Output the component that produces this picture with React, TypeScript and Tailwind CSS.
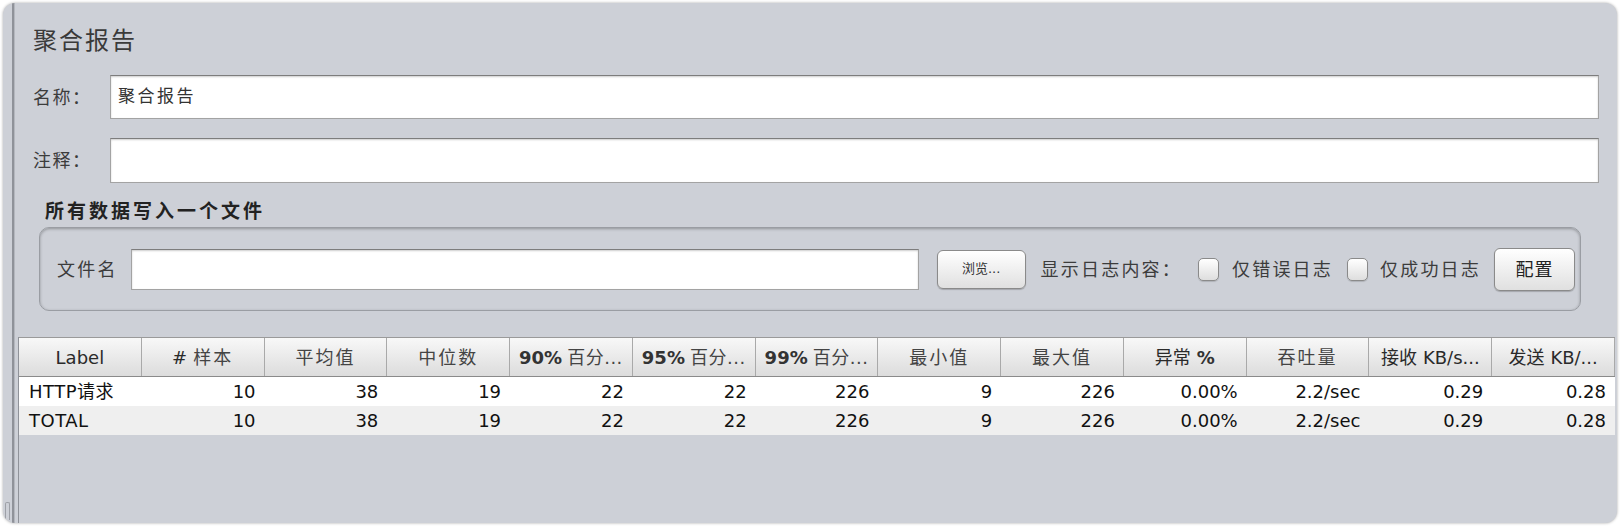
const headers = [
  "Label",
  "#|样本",
  "|平均值",
  "|中位数",
  "90%|百分...",
  "95%|百分...",
  "99%|百分...",
  "|最小值",
  "|最大值",
  "异常|%",
  "|吞吐量",
  "接收|KB/s...",
  "发送|KB/...",
];

const rows = [
  ["HTTP请求", "10", "38", "19", "22", "22", "226", "9", "226", "0.00%", "2.2/sec", "0.29", "0.28"],
  ["TOTAL", "10", "38", "19", "22", "22", "226", "9", "226", "0.00%", "2.2/sec", "0.29", "0.28"],
];

function TextField({ value, className }: { value?: string; className?: string }) {
  return (
    <div
      className={
        "flex items-center bg-white border border-[#a3a3a3] border-t-[#7d7d7d] shadow-[inset_0_1px_2px_rgba(0,0,0,0.2)] pl-[7px] text-[17px] tracking-[2.5px] text-[#333] " +
        (className ?? "")
      }
    >
      {value}
    </div>
  );
}

function Checkbox() {
  return (
    <div className="w-[21px] h-[23px] rounded-[5px] border border-[#8a8a8a] bg-linear-to-b from-white to-[#dedede] shadow-[0_1px_1px_rgba(0,0,0,0.15)]" />
  );
}

function HeaderCell({ text }: { text: string }) {
  const [a, b] = text.includes("|") ? text.split("|") : [text, ""];
  const pct = /\d%/.test(a);
  return (
    <div
      className={
        "flex items-center justify-center border-r border-[#a9a9a9] bg-linear-to-b from-[#f8f8f8] to-[#dcdcdc] text-[18px] text-[#2a2a2a] whitespace-nowrap overflow-hidden " +
        (pct ? "gap-[5px]" : "gap-[6px]")
      }
    >
      {a && <span className={pct ? "font-semibold text-[#333]" : ""}>{a}</span>}
      {b && (
        <span
          className={
            pct
              ? "tracking-[0.5px] text-[#444]"
              : /[\u4e00-\u9fff]/.test(b)
                ? "tracking-[2px] text-[#444]"
                : b === "%"
                  ? "font-semibold text-[#333]"
                  : ""
          }
        >
          {b}
        </span>
      )}
    </div>
  );
}

export default function App() {
  return (
    <div className="w-[1620px] h-[528px] bg-white pt-[3px] px-[3px] pb-[5px] flex font-['DejaVu_Sans','Noto_Sans_CJK_SC',sans-serif]">
      <div className="flex-1 flex rounded-[12px] bg-[#cdd0d7] shadow-[0_0_3px_rgba(0,0,0,0.35)] overflow-hidden">
        {/* left splitter strip */}
        <div className="w-[9px] flex flex-col justify-end items-center pb-[3px]">
          <div className="w-[5px] h-[18px] rounded-t-[2px] border border-b-0 border-[#9da0a7]" />
        </div>
        <div className="w-[3px] bg-[#8f9299] border-r border-[#b4b7be]" />

        <div className="flex-1 flex flex-col">
          <div className="pt-[23px] pl-[18px] h-[53px] text-[24px] leading-[30px] tracking-[2px] text-[#3a3a3a]">
            聚合报告
          </div>

          <div className="mt-[19px] flex items-center pl-[18px] pr-[18px]">
            <div className="w-[77px] text-[18px] tracking-[1.5px] text-[#3c3c3c]">名称：</div>
            <TextField value="聚合报告" className="flex-1 h-[44px]" />
          </div>

          <div className="mt-[19px] flex items-center pl-[18px] pr-[18px]">
            <div className="w-[77px] text-[18px] tracking-[1.5px] text-[#3c3c3c]">注释：</div>
            <TextField className="flex-1 h-[45px]" />
          </div>

          <div className="mt-[16px] pl-[30px] h-[24px] text-[19px] leading-[24px] font-bold tracking-[3px] text-[#222]">
            所有数据写入一个文件
          </div>

          <div className="mt-[4px] ml-[24px] mr-[36px] h-[84px] rounded-[10px] border border-[#9a9da3] shadow-[inset_0_1px_3px_rgba(0,0,0,0.3)] flex items-center pl-[17px] text-[18px] tracking-[2.2px] text-[#3c3c3c]">
            <span>文件名</span>
            <TextField className="ml-[13px] w-[788px] h-[41px]" />
            <button className="ml-[18px] w-[89px] h-[39px] rounded-[6px] border border-[#8a8a8a] bg-linear-to-b from-white to-[#e0e0e0] shadow-[0_1px_1px_rgba(0,0,0,0.2)] text-[13px] tracking-normal text-[#333]">
              浏览...
            </button>
            <span className="ml-[15px]">显示日志内容：</span>
            <div className="ml-[16px]">
              <Checkbox />
            </div>
            <span className="ml-[13px]">仅错误日志</span>
            <div className="ml-[14px]">
              <Checkbox />
            </div>
            <span className="ml-[12px]">仅成功日志</span>
            <button className="ml-[13px] w-[81px] h-[43px] rounded-[6px] border border-[#8a8a8a] bg-linear-to-b from-white to-[#e0e0e0] shadow-[0_1px_1px_rgba(0,0,0,0.2)] text-[18px] tracking-[1px] text-[#222]">
              配置
            </button>
          </div>

          <div className="mt-[26px] ml-[3px] mr-[2px] flex-1 flex flex-col border-l border-[#8f9299]">
            <div className="grid grid-cols-[repeat(13,minmax(0,1fr))] h-[40px] border-t border-b border-[#9a9a9a] border-b-[#8a8a8a]">
              {headers.map((h) => (
                <HeaderCell key={h} text={h} />
              ))}
            </div>
            {rows.map((r, i) => (
              <div
                key={i}
                className={
                  "grid grid-cols-[repeat(13,minmax(0,1fr))] h-[29px] items-center text-[18px] text-[#111] " +
                  (i === 0 ? "bg-white" : "bg-[#efefef]")
                }
              >
                {r.map((c, j) => (
                  <div
                    key={j}
                    className={
                      j === 0
                        ? "pl-[10px] text-left whitespace-nowrap tracking-[0.5px]"
                        : "pr-[9px] text-right whitespace-nowrap"
                    }
                  >
                    {c}
                  </div>
                ))}
              </div>
            ))}
            <div className="flex-1" />
          </div>
        </div>
      </div>
    </div>
  );
}
